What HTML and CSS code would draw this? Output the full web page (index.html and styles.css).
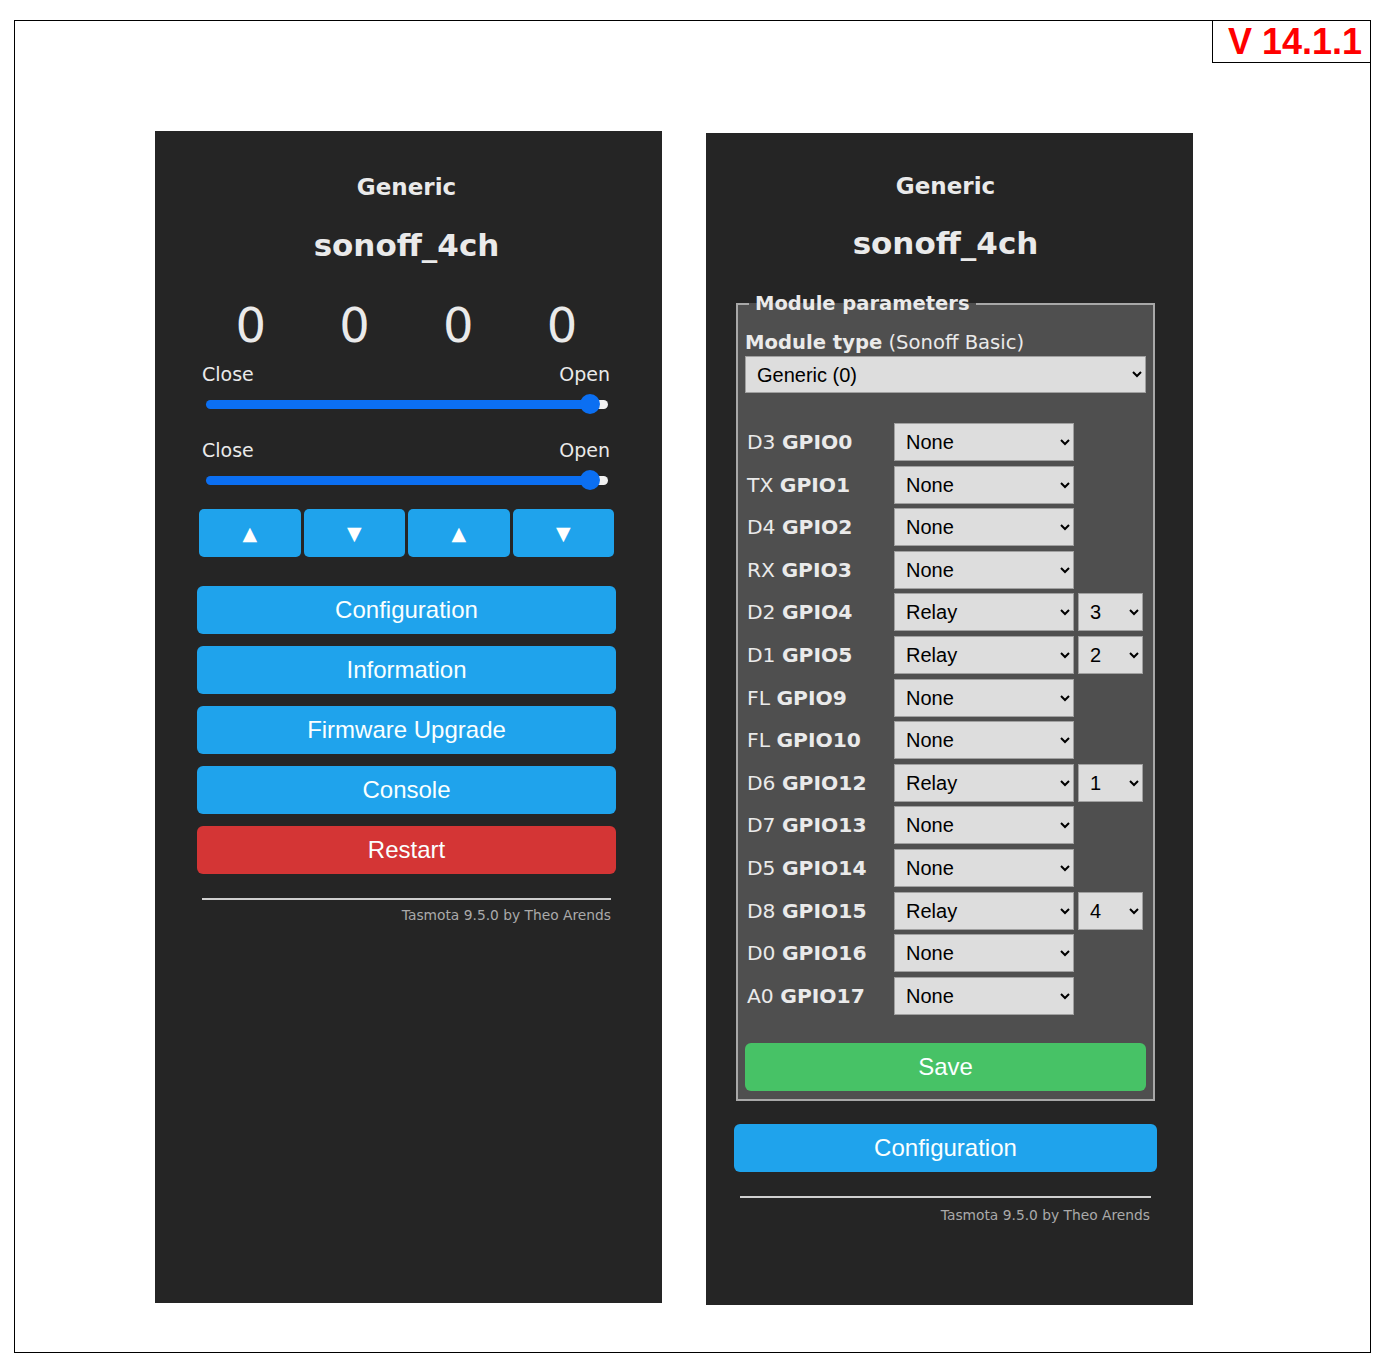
FILE: index.html
```html
<!DOCTYPE html>
<html lang="en">
<head>
<meta charset="utf-8">
<title>Tasmota - Generic</title>
<link rel="stylesheet" href="styles.css">
</head>
<body>

<div id="sheet">

<div id="top">
<div id="version">V 14.1.1</div>
</div>

<div id="screens">

<!-- main menu -->
<div class="panel" id="main">
<h3>Generic</h3>
<h2>sonoff_4ch</h2>

<div class="values">
<div>0</div><div>0</div><div>0</div><div>0</div>
</div>

<div class="shutter">
<div class="ends"><span>Close</span><span>Open</span></div>
<input type="range" min="0" max="100" value="98">
</div>
<div class="shutter">
<div class="ends"><span>Close</span><span>Open</span></div>
<input type="range" min="0" max="100" value="98">
</div>

<div class="arrows">
<button>&#9650;</button><button>&#9660;</button><button>&#9650;</button><button>&#9660;</button>
</div>

<div class="menu">
<button class="btn">Configuration</button>
<button class="btn">Information</button>
<button class="btn">Firmware Upgrade</button>
<button class="btn">Console</button>
<button class="btn red">Restart</button>
</div>

<div class="rule"></div>
<div class="foot">Tasmota 9.5.0 by Theo Arends</div>
</div>

<!-- module config -->
<div class="panel" id="config">
<h3>Generic</h3>
<h2>sonoff_4ch</h2>

<fieldset>
<legend>Module parameters</legend>
<label class="mtype" for="module"><b>Module type</b> (Sonoff Basic)</label>
<select id="module"><option>Generic (0)</option></select>

<div class="gpio">
<span class="pin">D3 <b>GPIO0</b></span><select class="fn"><option>None</option></select>
<span class="pin">TX <b>GPIO1</b></span><select class="fn"><option>None</option></select>
<span class="pin">D4 <b>GPIO2</b></span><select class="fn"><option>None</option></select>
<span class="pin">RX <b>GPIO3</b></span><select class="fn"><option>None</option></select>
<span class="pin">D2 <b>GPIO4</b></span><select class="fn"><option>Relay</option></select><select class="idx"><option>3</option></select>
<span class="pin">D1 <b>GPIO5</b></span><select class="fn"><option>Relay</option></select><select class="idx"><option>2</option></select>
<span class="pin">FL <b>GPIO9</b></span><select class="fn"><option>None</option></select>
<span class="pin">FL <b>GPIO10</b></span><select class="fn"><option>None</option></select>
<span class="pin">D6 <b>GPIO12</b></span><select class="fn"><option>Relay</option></select><select class="idx"><option>1</option></select>
<span class="pin">D7 <b>GPIO13</b></span><select class="fn"><option>None</option></select>
<span class="pin">D5 <b>GPIO14</b></span><select class="fn"><option>None</option></select>
<span class="pin">D8 <b>GPIO15</b></span><select class="fn"><option>Relay</option></select><select class="idx"><option>4</option></select>
<span class="pin">D0 <b>GPIO16</b></span><select class="fn"><option>None</option></select>
<span class="pin">A0 <b>GPIO17</b></span><select class="fn"><option>None</option></select>
</div>

<button class="btn green">Save</button>
</fieldset>

<button class="btn">Configuration</button>

<div class="rule"></div>
<div class="foot">Tasmota 9.5.0 by Theo Arends</div>
</div>

</div>
</div>

</body>
</html>
```

FILE: styles.css
```css
body
{
margin: 0;
background: #ffffff;
font-family: "DejaVu Sans", Verdana, sans-serif;
}

#sheet
{
box-sizing: border-box;
width: 1357px;
height: 1333px;
margin: 20px 0 0 14px;
border: 1px solid #000000;
}

#top
{
display: flex;
justify-content: flex-end;
}

#version
{
box-sizing: border-box;
width: 159px;
height: 43px;
margin: -1px -1px 0 0;
padding-left: 15px;
border: 1px solid #000000;
color: #ff0000;
font: bold 36px/41px "Liberation Sans", Arial, sans-serif;
}

#screens
{
display: flex;
align-items: flex-start;
gap: 44px;
margin: 68px 0 0 140px;
}

.panel
{
box-sizing: border-box;
height: 1172px;
background: #252525;
color: #eaeaea;
}

#main
{
width: 507px;
padding: 42px 46px 0 42px;
}

#config
{
width: 487px;
margin-top: 2px;
padding: 39px 36px 0 28px;
}

h3
{
margin: 0;
font-size: 23px;
line-height: 28px;
text-align: center;
}

h2
{
margin: 26px 0 0;
font-size: 31px;
line-height: 36px;
text-align: center;
}

#config h2
{
margin-top: 25px;
}

/* main menu */

.values
{
display: grid;
grid-template-columns: repeat(4, 1fr);
margin: 34px 2px 0;
font-size: 48px;
line-height: 56px;
text-align: center;
}

.shutter
{
margin: 10px 6px 0 5px;
}

.shutter + .shutter
{
margin-top: 25px;
}

.ends
{
display: flex;
justify-content: space-between;
font-size: 19px;
line-height: 22px;
}

.shutter input
{
display: block;
width: calc(100% - 6px);
height: 20px;
margin: 9px 2px 0 4px;
-webkit-appearance: none;
appearance: none;
background: transparent;
}

.shutter input::-webkit-slider-runnable-track
{
height: 9px;
border-radius: 5px;
background: linear-gradient(to right, #0b6ff2 96.5%, #f2f2f2 96.5%);
}

.shutter input::-webkit-slider-thumb
{
-webkit-appearance: none;
width: 20px;
height: 20px;
margin-top: -5.5px;
border-radius: 50%;
background: #0b6ff2;
}

.arrows
{
display: grid;
grid-template-columns: repeat(4, 1fr);
gap: 3px;
margin: 19px 2px 0;
}

.arrows button
{
height: 48px;
padding: 0;
border: 0;
border-radius: 5px;
background: #1fa3ec;
color: #ffffff;
font-family: "DejaVu Sans", sans-serif;
font-size: 19px;
}

.menu
{
display: flex;
flex-direction: column;
gap: 12px;
margin-top: 29px;
}

.btn
{
display: block;
width: 100%;
height: 48px;
padding: 0;
border: 0;
border-radius: 6px;
background: #1fa3ec;
color: #faffff;
font-family: "Liberation Sans", Arial, sans-serif;
font-size: 24px;
line-height: 48px;
}

.red
{
background: #d43535;
}

.green
{
margin-top: 28px;
background: #47c266;
}

.rule
{
margin: 24px 5px 0;
border-top: 2px solid #d0d0d0;
}

.foot
{
margin: 7px 5px 0;
color: #aaaaaa;
font-size: 13.8px;
line-height: 17px;
text-align: right;
}

#config .rule
{
margin: 24px 6px 0;
}

#config .foot
{
margin: 9px 7px 0 6px;
}

/* module config */

fieldset
{
min-width: 0;
margin: 32px 2px 0;
padding: 17px 7px 8px;
border: 2px solid #a8a8a8;
background: #4f4f4f;
}

legend
{
margin-left: 4px;
padding: 0 6px;
font-size: 19.5px;
font-weight: bold;
line-height: 22px;
}

.mtype
{
display: block;
font-size: 19.6px;
line-height: 22px;
}

select
{
box-sizing: border-box;
padding: 0 10px 0 7px;
border: 1px solid #a0a0a0;
border-radius: 0;
background: #dddddd;
color: #000000;
font-family: "Liberation Sans", Arial, sans-serif;
font-size: 20px;
}

#module
{
display: block;
width: 100%;
height: 37px;
margin-top: 2px;
}

.gpio
{
display: grid;
grid-template-columns: 145px 180px 65px;
column-gap: 4px;
row-gap: 4.6px;
align-items: center;
margin-top: 30px;
}

.gpio select
{
width: 100%;
height: 38px;
}

.pin
{
grid-column: 1;
padding-left: 2px;
font-size: 20.3px;
line-height: 24px;
white-space: nowrap;
}

.fn
{
grid-column: 2;
}

.idx
{
grid-column: 3;
}

#config > .btn
{
margin-top: 23px;
}
```
